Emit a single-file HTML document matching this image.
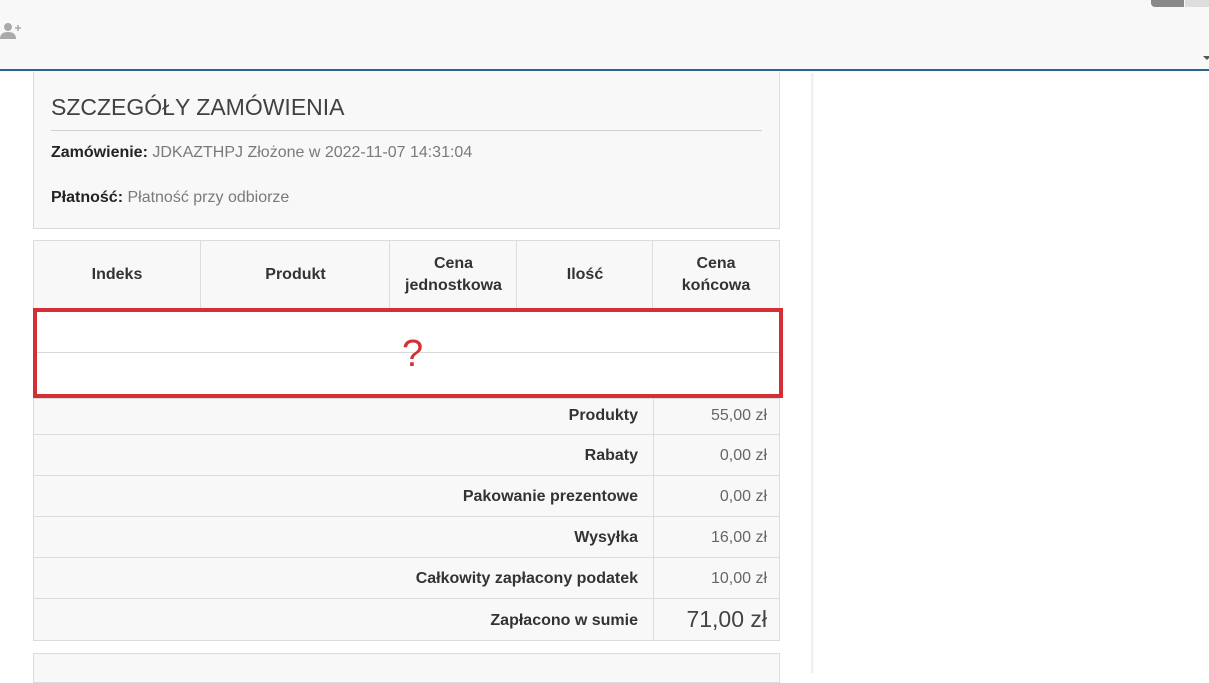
<!DOCTYPE html>
<html><head><meta charset="utf-8"><style>
*{box-sizing:border-box;margin:0;padding:0}
body{width:1209px;height:668px;overflow:hidden;background:#fff;font-family:"Liberation Sans",Arial,sans-serif;position:relative;color:#414141}
.hdr{position:absolute;left:0;top:0;width:1209px;height:71px;background:#f8f8f8;border-bottom:2px solid #2d6289}
.side{position:absolute;left:811px;top:73px;width:3px;height:600px;background:linear-gradient(90deg,#ececec,#f8f8f8)}
.box{position:absolute;left:33px;width:747px;background:#f8f8f8;border:1px solid #dcdcdc}
h1{position:absolute;left:17px;top:22px;font-size:23px;font-weight:normal;color:#414141}
.hr{position:absolute;left:17px;right:17px;top:58px;border-top:1px solid #d0d0d0}
.ln{position:absolute;left:17px;font-size:16px;color:#7a7a7a}
.ln b{color:#232323}
.a{position:absolute;border:1px solid #dcdcdc;background:#f8f8f8}
.th{position:absolute;top:241px;height:68px;border-left:1px solid #dcdcdc;display:flex;align-items:center;justify-content:center;text-align:center;font-weight:bold;font-size:16px;color:#333;line-height:22px}
.row{position:absolute;left:33px;width:747px;height:41px;border:1px solid #dcdcdc;border-top:none;background:#f8f8f8;font-size:16px}
.row .l{position:absolute;right:141px;top:0;line-height:41px;font-weight:bold;color:#333}
.row .v{position:absolute;left:619px;top:0;width:127px;height:100%;border-left:1px solid #dcdcdc;text-align:right;padding-right:13px;line-height:41px;color:#666}
</style></head><body>
<div class="hdr"></div>
<svg style="position:absolute;left:0;top:22px" width="24" height="18" viewBox="0 0 24 18"><circle cx="8" cy="5" r="4" fill="#aaa"/><path d="M0 17c0-5 3-7 8-7s8 2 8 7z" fill="#aaa"/><path d="M18 3v6M15 6h6" stroke="#aaa" stroke-width="1.6"/></svg>
<div style="position:absolute;left:1151px;top:0;width:33px;height:7px;background:#888;border-radius:0 0 0 4px"></div>
<div style="position:absolute;left:1185px;top:0;width:24px;height:7px;background:#ddd"></div>
<div style="position:absolute;left:1203px;top:56px;width:0;height:0;border-left:4px solid transparent;border-right:4px solid transparent;border-top:4px solid #555"></div>
<div class="side"></div>
<div class="box" style="top:72px;height:157px;border-top:none">
<h1>SZCZEGÓŁY ZAMÓWIENIA</h1><div class="hr"></div>
<div class="ln" style="top:72px"><b>Zamówienie:</b> JDKAZTHPJ Złożone w 2022-11-07 14:31:04</div>
<div class="ln" style="top:117px"><b>Płatność:</b> Płatność przy odbiorze</div>
</div>
<div class="a" style="left:33px;top:240px;width:747px;height:70px"></div>
<div class="th" style="left:33px;width:168px;border-left:none">Indeks</div>
<div class="th" style="left:200px;width:190px">Produkt</div>
<div class="th" style="left:389px;width:128px">Cena<br>jednostkowa</div>
<div class="th" style="left:516px;width:137px">Ilość</div>
<div class="th" style="left:652px;width:127px">Cena<br>końcowa</div>
<div style="position:absolute;left:33px;top:308px;width:750px;height:90px;border:4px solid #d42f35;background:#fff"></div>
<div style="position:absolute;left:37px;top:352px;width:742px;border-top:1px solid #d8d8d8"></div>
<div style="position:absolute;left:402px;top:334px;font-size:38px;color:#d42f35;line-height:40px">?</div>
<div class="row" style="top:398px;height:37px;border-top:1px solid #dcdcdc"><span class="l" style="line-height:34px">Produkty</span><span class="v" style="line-height:34px">55,00 zł</span></div>
<div class="row" style="top:435px"><span class="l">Rabaty</span><span class="v">0,00 zł</span></div>
<div class="row" style="top:476px"><span class="l">Pakowanie prezentowe</span><span class="v">0,00 zł</span></div>
<div class="row" style="top:517px"><span class="l">Wysyłka</span><span class="v">16,00 zł</span></div>
<div class="row" style="top:558px"><span class="l">Całkowity zapłacony podatek</span><span class="v">10,00 zł</span></div>
<div class="row" style="top:599px;height:42px"><span class="l" style="line-height:44px">Zapłacono w sumie</span><span class="v" style="font-size:23px;color:#444">71,00 zł</span></div>
<div class="a" style="left:33px;top:653px;width:747px;height:30px"></div>
</body></html>
